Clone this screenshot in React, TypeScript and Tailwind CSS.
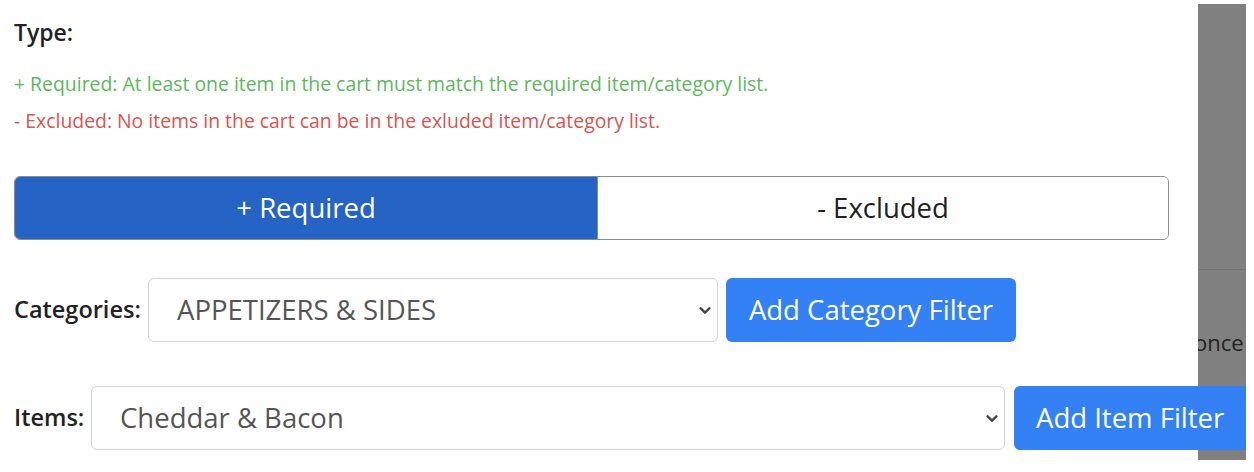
import React, { useState } from 'react';

const font = { fontFamily: '"Open Sans", "Liberation Sans", sans-serif' };

const Chevron = () => (
  <svg width="14" height="14" viewBox="0 0 16 16" className="shrink-0">
    <path d="M3 6l5 5 5-5" fill="none" stroke="#444" strokeWidth="2.8" strokeLinecap="round" strokeLinejoin="round" />
  </svg>
);

const FakeSelect: React.FC<{ value: string; className: string }> = ({ value, className }) => (
  <div className={`flex shrink-0 items-center justify-between h-16 pl-7 pr-[5px] bg-white border border-[#ced4da] rounded-md text-[27.5px] text-[#555] ${className}`}>
    <span>{value}</span>
    <Chevron />
  </div>
);

export default function App() {
  const [mode, setMode] = useState<'required' | 'excluded'>('required');

  return (
    <div className="relative w-[1254px] h-[472px] bg-white overflow-hidden" style={font}>
      {/* backdrop panel peeking out on the right */}
      <div className="absolute left-[1198px] top-[4px] w-[48px] h-[456px] bg-[#808080] flex flex-col overflow-hidden">
        <div className="h-[266px] border-b border-[#747474]" />
        <div className="pt-[56px] text-[22px] text-[#222] whitespace-nowrap -ml-[4px]">once</div>
      </div>

      <div className="relative z-10 w-[1246px] h-full overflow-hidden pl-[14px] pt-[17px]">
        <div className="text-[23px] font-semibold text-[#222] leading-[30px]">Type:</div>
        <div className="mt-[24px] text-[19.4px] leading-[26px] text-[#5cb85c]">
          + Required: At least one item in the cart must match the required item/category list.
        </div>
        <div className="mt-[11px] text-[19.4px] leading-[26px] text-[#d9534f]">
          - Excluded: No items in the cart can be in the exluded item/category list.
        </div>

        <div className="mt-[42px] flex w-[1155px] h-16 border border-[#8c8c8c] rounded-md overflow-hidden text-[27.5px]">
          <button
            onClick={() => setMode('required')}
            className={`w-[582px] h-full ${mode === 'required' ? 'bg-[#2563c4] text-white' : 'bg-white text-[#222]'}`}
          >
            + Required
          </button>
          <button
            onClick={() => setMode('excluded')}
            className={`flex-1 h-full border-l border-[#8c8c8c] ${mode === 'excluded' ? 'bg-[#2563c4] text-white' : 'bg-white text-[#222]'}`}
          >
            - Excluded
          </button>
        </div>

        <div className="mt-[38px] flex items-center">
          <span className="w-[134px] shrink-0 text-[23.5px] font-semibold text-[#222]">Categories:</span>
          <FakeSelect value="APPETIZERS & SIDES" className="w-[570px]" />
          <button className="ml-[8px] h-16 w-[290px] shrink-0 rounded-md bg-[#3381f5] text-white text-[27.5px]">
            Add Category Filter
          </button>
        </div>

        <div className="mt-[44px] flex items-center">
          <span className="w-[77px] shrink-0 text-[23.5px] font-semibold text-[#222]">Items:</span>
          <FakeSelect value="Cheddar & Bacon" className="w-[914px]" />
          <button className="ml-[9px] h-16 w-[260px] shrink-0 rounded-md bg-[#3381f5] text-white text-[27.5px] text-left pl-[22px] whitespace-nowrap">
            Add Item Filter
          </button>
        </div>
      </div>
    </div>
  );
}
